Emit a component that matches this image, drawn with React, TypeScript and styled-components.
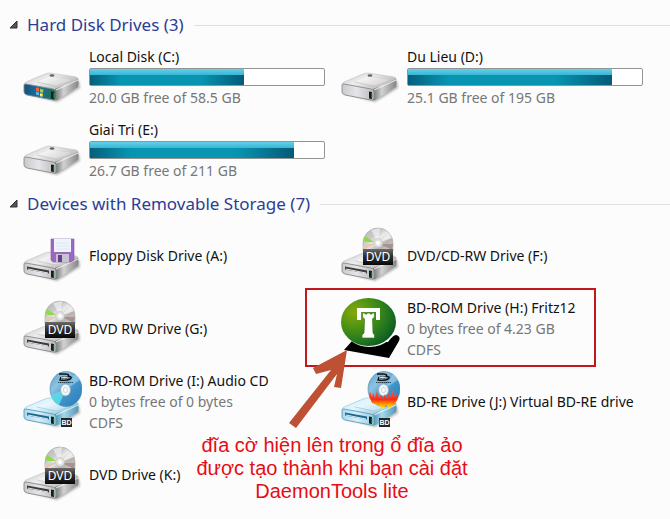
import React, { useId, useState } from "react";
import styled, { createGlobalStyle } from "styled-components";

const GlobalStyle = createGlobalStyle`
  body {
    margin: 0;
    background: #fcfcfc;
    color: #111;
    font-family: "Noto Sans", "Open Sans", sans-serif;
    font-size: 14px;
  }
`;

const Page = styled.main`
  display: flex;
  flex-direction: column;
  gap: 4px;
  padding: 11px 0 8px;
`;

const Group = styled.section`
  display: flex;
  flex-direction: column;
  gap: 1px;
`;

const GroupHeader = styled.h2`
  display: flex;
  align-items: center;
  gap: 10px;
  margin: 0;
  padding-left: 8px;
  height: 28px;
  font-weight: 400;

  &::after {
    content: "";
    flex: 1;
    height: 1px;
    background: #dedfe1;
  }
`;

const GroupToggle = styled.button`
  display: flex;
  align-items: center;
  gap: 8px;
  padding: 0;
  border: 0;
  background: none;
  color: #2c3c94;
  font: inherit;
  font-size: 17px;
  line-height: 28px;
  white-space: nowrap;
  cursor: pointer;
`;

const Tiles = styled.ul`
  display: grid;
  grid-template-columns: repeat(auto-fill, 318px);
  grid-auto-rows: 73px;
  margin: 0;
  padding: 0 0 0 22px;
  list-style: none;
`;

const Tile = styled.li`
  position: relative;
  display: flex;
  align-items: center;
  gap: 7px;
`;

const TileIcon = styled.svg`
  flex: none;
  width: 60px;
  height: 65px;
`;

const TileText = styled.div`
  display: flex;
  flex-direction: column;
  line-height: 21px;
  white-space: nowrap;
`;

const DriveName = styled.span`
  color: #111;
`;

const DriveInfo = styled.span`
  color: #777;
`;

const Capacity = styled.div`
  width: 234px;
  height: 16px;
  border: 1px solid #929496;
  border-radius: 2px;
  background: #fff;
  margin: 1px 0;
`;

const CapacityFill = styled.div<{ $percent: number }>`
  width: ${(p) => p.$percent}%;
  height: 100%;
  background:
    linear-gradient(#62d2e9 0, #38b4d2 38%, transparent 38%),
    linear-gradient(90deg, #04607c 0, #0795b2 20%, #0795b2 72%, #045a76 100%);
`;

const Highlight = styled.div`
  position: absolute;
  box-sizing: border-box;
  left: -35px;
  top: -4px;
  width: 291px;
  height: 79px;
  border: 2px solid #c4161c;
`;

const Arrow = styled.svg`
  position: absolute;
  left: -52px;
  top: 58px;
  width: 64px;
  height: 80px;
`;

const Note = styled.p`
  position: absolute;
  left: -158px;
  top: 142px;
  width: 300px;
  margin: 0;
  color: #e60d14;
  font-family: "Liberation Sans", Arial, sans-serif;
  font-size: 20px;
  line-height: 23px;
  text-align: center;
`;

type IconKind = "system" | "disk" | "floppy" | "dvd" | "bluray" | "burner" | "fritz";

function DriveBody({ id, blue, system, slot }: { id: string; blue?: boolean; system?: boolean; slot?: boolean }) {
  const edge = blue ? "#5a9dba" : "#8a8a8a";
  return (
    <g>
      <defs>
        <linearGradient id={`${id}-top`} x1="0" y1="0" x2="1" y2="0.6">
          <stop offset="0" stopColor={blue ? "#d5effa" : "#c4c4c4"} />
          <stop offset="0.45" stopColor={blue ? "#e2f5fd" : "#eeeeee"} />
          <stop offset="1" stopColor={blue ? "#8fc6de" : "#b4b4b4"} />
        </linearGradient>
        <linearGradient id={`${id}-side`} x1="0" y1="0" x2="1" y2="0">
          <stop offset="0" stopColor={blue ? "#3f89aa" : "#686868"} />
          <stop offset="0.4" stopColor={blue ? "#a7d8ea" : "#d2d2d2"} />
          <stop offset="1" stopColor={blue ? "#4f98b8" : "#858585"} />
        </linearGradient>
        <linearGradient id={`${id}-front`} x1="0" y1="0" x2="1" y2="0">
          <stop offset="0" stopColor={system ? "#15517c" : blue ? "#a8d9ed" : "#c9c9cd"} />
          <stop offset="0.45" stopColor={system ? "#1a719c" : blue ? "#d6f0fa" : "#e6e6ea"} />
          <stop offset="1" stopColor={system ? "#1d6d4c" : blue ? "#94cbe2" : "#b8b8bd"} />
        </linearGradient>
        <filter id={`${id}-soft`} x="-20%" y="-20%" width="140%" height="140%">
          <feGaussianBlur stdDeviation="1.2" />
        </filter>
      </defs>
      <path d="M6 50 L35 58 L58 44 L57 37 L30 36Z" fill="#777" opacity="0.55" filter={`url(#${id}-soft)`} />
      <path d="M2 41 Q2 39 4 38 L23 30 Q25 29 28 29 L54 33 Q57 34 56 36 L34 46Z" fill={`url(#${id}-top)`} stroke={blue ? "#8dc0d6" : "#bdbdbd"} strokeWidth="0.6" />
      <path d="M33 45 L56 35 Q57 38 56 43 L37 55 Q35 57 32 56Z" fill={`url(#${id}-side)`} />
      <path d="M34 46 L56 36" stroke="#fff" strokeWidth="1.2" opacity="0.7" />
      <path d="M15 38 Q24 34 28 33 L50 36 Q40 42 34 42Z" fill="#fff" opacity="0.3" />
      <path d="M15 38 L34 42 Q42 40 50 36" fill="none" stroke={blue ? "#8fc4da" : "#bcbcbc"} strokeWidth="0.6" />
      <path d="M2 41 Q2 40 4 40 L31 45 Q34 46 34 48 L34 54 Q34 57 31 56 L5 51 Q2 50 2 48Z" fill={`url(#${id}-front)`} stroke={edge} strokeWidth="0.9" />
      {!slot && <ellipse cx="30" cy="31.500" rx="2.500" ry="1.200" fill="#666" />}
      {slot && (
        <g>
          <path d="M5 43.500 L27 47.500 L27 50.500 L5 46.500Z" fill={blue ? "#1f6a94" : "#3c3c3c"} />
          <path d="M6 46 L26 50" stroke="#f5f5f5" strokeWidth="0.9" />
        </g>
      )}
      {system && (
        <g>
          <path d="M14 44 Q16 43 17 44.500 L17 48 Q15 46.500 14 47.500Z" fill="#ef6537" />
          <path d="M18 44.500 Q20 46 21.500 45 L21 48.500 Q19.500 49 18 48Z" fill="#a8cf45" />
          <path d="M14 48 Q16 47.500 17 49 L17 51.500 Q15 50.500 14 51Z" fill="#5cb5ee" />
          <path d="M18 49 Q19.500 50 21 49.500 L20.500 52.500 Q19 53 18 52Z" fill="#ffe65c" />
        </g>
      )}
      <path d="M29 47.500 L32 48 L32 55 L29 54.500Z" fill="#122116" />
      <path d="M32 49 L32 54" stroke="#4fa862" strokeWidth="0.8" />
    </g>
  );
}

function FloppyArt() {
  return (
    <g>
      <path d="M29 16 H52 V37 L49 39 H31 L29 37Z" fill="#9a68c0" stroke="#8354a8" strokeWidth="0.6" />
      <rect x="32" y="16" width="17" height="13" fill="#eef4fb" />
      <path d="M34 20 H47 M34 23 H47 M34 26 H47" stroke="#dbe5f0" strokeWidth="0.8" />
      <rect x="34" y="31" width="13" height="8" fill="#c6c4d0" />
      <rect x="36" y="32" width="4" height="7" fill="#69408c" />
    </g>
  );
}

function DvdArt({ id }: { id: string }) {
  return (
    <g>
      <defs>
        <linearGradient id={`${id}-disc`} x1="0" y1="0" x2="1" y2="1">
          <stop offset="0" stopColor="#b5b5b5" />
          <stop offset="0.35" stopColor="#cacaca" />
          <stop offset="0.5" stopColor="#ececec" />
          <stop offset="0.7" stopColor="#b9b2ae" />
          <stop offset="1" stopColor="#d0d0d0" />
        </linearGradient>
        <linearGradient id={`${id}-plate`} x1="0" y1="0" x2="0" y2="1">
          <stop offset="0" stopColor="#6a6a6a" />
          <stop offset="0.45" stopColor="#303030" />
          <stop offset="1" stopColor="#080808" />
        </linearGradient>
      </defs>
      <path d="M23 28 V20 A15 15 0 0 1 53 20 V28Z" fill={`url(#${id}-disc)`} stroke="#a4a4a4" strokeWidth="0.6" />
      <path d="M38 20 L31 7 L40 5Z" fill="#fff" opacity="0.5" />
      <path d="M38 20 L49 10 L52 15Z" fill="#f6f6f6" opacity="0.75" />
      <path d="M34 19 L25 13 L23 18 L28 19Z" fill="#8ddc45" />
      <path d="M36 20 L23 22 L24 27Z" fill="#e4c9b9" />
      <path d="M40 21 L53 21 L52 27Z" fill="#a8948f" />
      <circle cx="38" cy="20" r="4.500" fill="#e2e2e2" stroke="#bcbcbc" strokeWidth="0.6" />
      <circle cx="38" cy="20" r="2" fill="#fff" />
      <rect x="23" y="26" width="30" height="16" fill={`url(#${id}-plate)`} />
      <text x="38" y="38" textAnchor="middle" fill="#fff" fontFamily="Noto Sans, sans-serif" fontSize="12">
        DVD
      </text>
    </g>
  );
}

function BlurayDisc({ id, burning }: { id: string; burning?: boolean }) {
  return (
    <g>
      <defs>
        <linearGradient id={`${id}-blue`} x1="0" y1="0" x2="1" y2="1">
          <stop offset="0" stopColor="#5d9cc4" />
          <stop offset="0.3" stopColor="#8cc3e2" />
          <stop offset="0.6" stopColor="#3f93c9" />
          <stop offset="1" stopColor="#2a7ab3" />
        </linearGradient>
        <linearGradient id={`${id}-fire`} x1="0" y1="0" x2="0" y2="1">
          <stop offset="0" stopColor="#f4624d" />
          <stop offset="0.5" stopColor="#ff2b12" />
          <stop offset="0.8" stopColor="#ffb400" />
          <stop offset="1" stopColor="#ffec3a" />
        </linearGradient>
      </defs>
      <ellipse cx="44" cy="20" rx="16" ry="17.500" fill={`url(#${id}-blue)`} stroke="#4c86a8" strokeWidth="0.6" />
      <path d="M44 20 L29 26 Q31 34 37 36Z" fill="#5be0ea" opacity={burning ? 0 : 0.8} />
      <path d="M44 20 L53 5 L58 11Z" fill="#b4e0f4" opacity="0.5" />
      <path d="M37 5 H43 Q48 5 46 7 Q51 8 48 10 Q44 12 38 11 L39 8" fill="none" stroke="#111" strokeWidth="1.4" />
      <ellipse cx="42.500" cy="8.500" rx="3.500" ry="1.200" fill="#cbe4f0" stroke="#111" strokeWidth="0.5" />
      <path d="M36 13.500 H51" stroke="#28445a" strokeWidth="1" strokeDasharray="1.500 0.500" />
      <ellipse cx="43.500" cy="21" rx="5" ry="6" fill="#eef5f8" stroke="#8ba4b2" strokeWidth="0.7" />
      <ellipse cx="43.500" cy="21" rx="2" ry="2.500" fill="#fff" stroke="#b2bec6" strokeWidth="0.6" />
      {burning && (
        <path
          d="M29 27 L30 22 L32 28 L33 24 L35 29 L37 21 L39 29 L41 26 L43 30 L45 25 L47 30 L49 23 L50 29 L53 21 L54 28 L56 24 L58 29 L55 35 L52 37 L49 40 L46 36 L43 40 L38 36 L32 34Z"
          fill={`url(#${id}-fire)`}
        />
      )}
    </g>
  );
}

function BdBadge() {
  return (
    <g>
      <rect x="39" y="49" width="11" height="9" fill="#1d2a2c" />
      <text x="44.500" y="56" textAnchor="middle" fill="#fff" fontFamily="Liberation Sans, sans-serif" fontWeight="700" fontSize="7">
        BD
      </text>
    </g>
  );
}

function FritzArt({ id }: { id: string }) {
  return (
    <g>
      <defs>
        <radialGradient id={`${id}-globe`} cx="0.25" cy="0.3" r="0.85">
          <stop offset="0" stopColor="#85a80d" />
          <stop offset="0.4" stopColor="#4b9213" />
          <stop offset="0.75" stopColor="#1f7420" />
          <stop offset="1" stopColor="#0c5423" />
        </radialGradient>
      </defs>
      <path d="M4 54 L12 45 L48 46 Q53 39 56 39 Q61 40 59 45 L49 62Z" fill="#000" />
      <ellipse cx="29.500" cy="27" rx="27.500" ry="24" fill="#fcfcfc" />
      <ellipse cx="28.500" cy="26" rx="27.500" ry="24" fill={`url(#${id}-globe)`} />
      <path d="M17 12 H40 V24 H36 V16 H21 V24 H17Z" fill="#fff" />
      <path
        d="M22.500 17 H25 V18 H27 V17 H30 V18 H32 V17 H34.500 V21 L32.500 23 L33 37 L34.500 39 V42 H22 V39 L24 37 L24.500 23 L22.500 21Z"
        fill="#fff"
        stroke="#357c18"
        strokeWidth="0.7"
      />
    </g>
  );
}

function DriveIcon({ kind }: { kind: IconKind }) {
  const id = useId().replace(/[^a-zA-Z0-9]/g, "");
  const blu = kind === "bluray" || kind === "burner";
  return (
    <TileIcon viewBox="0 0 60 65" aria-hidden="true">
      {kind === "fritz" ? (
        <FritzArt id={id} />
      ) : (
        <DriveBody id={id} blue={blu} system={kind === "system"} slot={kind !== "system" && kind !== "disk"} />
      )}
      {blu && <BlurayDisc id={id} burning={kind === "burner"} />}
      {kind === "floppy" && <FloppyArt />}
      {kind === "dvd" && <DvdArt id={id} />}
      {blu && <BdBadge />}
    </TileIcon>
  );
}

interface Drive {
  name: string;
  icon: IconKind;
  info?: string[];
  used?: number;
  annotated?: boolean;
}

const hardDisks: Drive[] = [
  { name: "Local Disk (C:)", icon: "system", info: ["20.0 GB free of 58.5 GB"], used: 66 },
  { name: "Du Lieu (D:)", icon: "disk", info: ["25.1 GB free of 195 GB"], used: 87 },
  { name: "Giai Tri (E:)", icon: "disk", info: ["26.7 GB free of 211 GB"], used: 87 },
];

const removable: Drive[] = [
  { name: "Floppy Disk Drive (A:)", icon: "floppy" },
  { name: "DVD/CD-RW Drive (F:)", icon: "dvd" },
  { name: "DVD RW Drive (G:)", icon: "dvd" },
  { name: "BD-ROM Drive (H:) Fritz12", icon: "fritz", info: ["0 bytes free of 4.23 GB", "CDFS"], annotated: true },
  { name: "BD-ROM Drive (I:) Audio CD", icon: "bluray", info: ["0 bytes free of 0 bytes", "CDFS"] },
  { name: "BD-RE Drive (J:) Virtual BD-RE drive", icon: "burner" },
  { name: "DVD Drive (K:)", icon: "dvd" },
];

function Annotation() {
  return (
    <>
      <Highlight />
      <Arrow viewBox="0 0 64 80" aria-hidden="true">
        <path d="M59 0 L25 18 L28 24 L43 20 L1 73 L8 78 L49 24 L46 37 L53 38Z" fill="#be5034" />
      </Arrow>
      <Note>
        đĩa cờ hiện lên trong ổ đĩa ảo
        <br />
        được tạo thành khi bạn cài đặt
        <br />
        DaemonTools lite
      </Note>
    </>
  );
}

function DriveTile({ drive }: { drive: Drive }) {
  return (
    <Tile>
      <DriveIcon kind={drive.icon} />
      <TileText>
        <DriveName>{drive.name}</DriveName>
        {drive.used !== undefined && (
          <Capacity
            role="meter"
            aria-label={`${drive.name} used space`}
            aria-valuemin={0}
            aria-valuemax={100}
            aria-valuenow={drive.used}
          >
            <CapacityFill $percent={drive.used} />
          </Capacity>
        )}
        {drive.info?.map((line) => <DriveInfo key={line}>{line}</DriveInfo>)}
      </TileText>
      {drive.annotated && <Annotation />}
    </Tile>
  );
}

function DriveGroup({ title, drives }: { title: string; drives: Drive[] }) {
  const [open, setOpen] = useState(true);
  return (
    <Group>
      <GroupHeader>
        <GroupToggle type="button" aria-expanded={open} onClick={() => setOpen(!open)}>
          <svg width="11" height="11" viewBox="0 0 11 11" aria-hidden="true">
            {open ? <path d="M9 1 V8 H2Z" fill="#555" stroke="#333" /> : <path d="M3 1 L8 5 L3 9Z" fill="none" stroke="#777" />}
          </svg>
          {title} ({drives.length})
        </GroupToggle>
      </GroupHeader>
      {open && (
        <Tiles>
          {drives.map((drive) => (
            <DriveTile key={drive.name} drive={drive} />
          ))}
        </Tiles>
      )}
    </Group>
  );
}

export default function App() {
  return (
    <>
      <GlobalStyle />
      <Page>
        <DriveGroup title="Hard Disk Drives" drives={hardDisks} />
        <DriveGroup title="Devices with Removable Storage" drives={removable} />
      </Page>
    </>
  );
}
